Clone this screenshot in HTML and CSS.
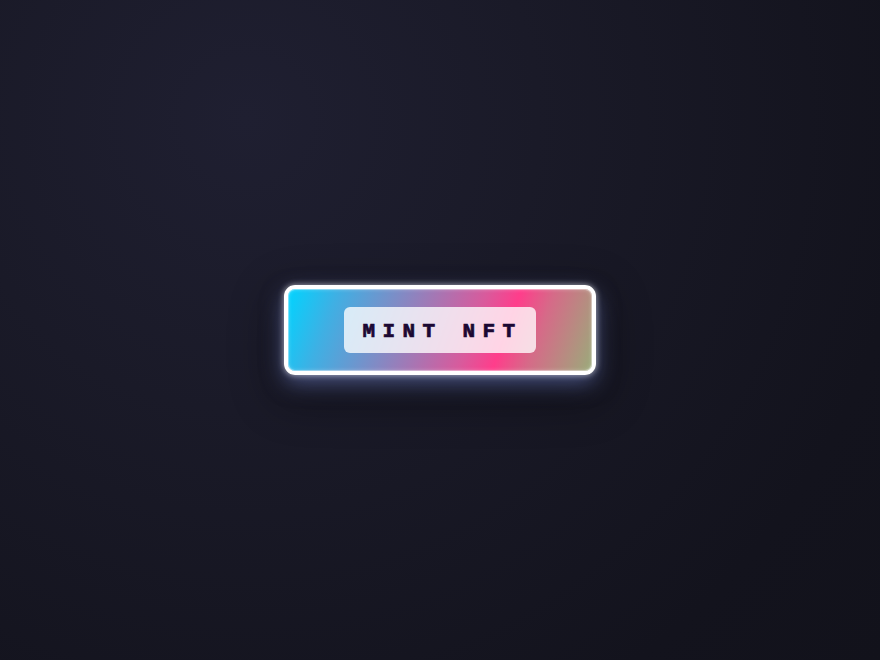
FILE: index.html
```html
<!DOCTYPE html>
<html lang="en">
<head>
<meta charset="utf-8">
<title>Mint NFT</title>
<link rel="stylesheet" href="styles.css">
</head>
<body>
  <main class="stage">
    <button class="mint-btn" type="button">
      <span class="mint-label">MINT NFT</span>
    </button>
  </main>
</body>
</html>
```

FILE: styles.css
```css
* { box-sizing: border-box; }

html, body {
  margin: 0;
  height: 100%;
}

body {
  background: radial-gradient(circle at 28% 18%, #1f1f31 0%, #1a1a28 35%, #13131d 80%, #12121b 100%);
  font-family: "Liberation Mono", "Courier New", monospace;
}

.stage {
  height: 100%;
  display: flex;
  align-items: center;
  justify-content: center;
}

.mint-btn {
  width: 312px;
  height: 90px;
  padding: 0;
  border: 4px solid #ffffff;
  border-radius: 11px;
  background: linear-gradient(110deg, #00d4ff 0%, #3eb0e4 15%, #8d84bf 38%, #d95a9c 60%, #ff3d8b 70%, #d66a88 80%, #9aab7a 100%);
  box-shadow:
    inset 0 0 0 1px rgba(255, 255, 255, 0.35),
    inset 0 0 4px rgba(255, 255, 255, 0.4),
    0 0 6px rgba(255, 255, 255, 0.6),
    0 8px 22px rgba(130, 150, 235, 0.5),
    0 16px 44px 12px rgba(0, 0, 0, 0.32);
  display: flex;
  align-items: center;
  justify-content: center;
  cursor: pointer;
  font-family: inherit;
}

.mint-label {
  display: block;
  width: 192px;
  height: 46px;
  padding: 4px 0 0 5px;
  line-height: 42px;
  border-radius: 6px;
  background: rgba(255, 255, 255, 0.78);
  color: #1b0833;
  font-weight: 700;
  font-size: 21px;
  letter-spacing: 7.4px;
  text-align: center;
  -webkit-text-stroke: 0.7px #1b0833;
}
```
